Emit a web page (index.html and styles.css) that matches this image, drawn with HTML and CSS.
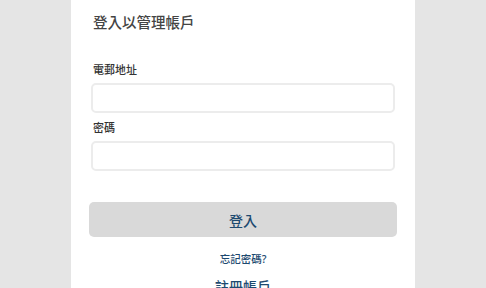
FILE: index.html
```html
<!DOCTYPE html>
<html lang="zh-Hant">
<head>
  <meta charset="UTF-8" />
  <title>登入</title>
  <link rel="stylesheet" href="styles.css">
</head>
<body>

<div class="card">
  <h1>登入以管理帳戶</h1>

  <form class="login-form" onsubmit="return false">
    <label for="email">電郵地址</label>
    <input type="email" id="email">
    <label for="password" class="second">密碼</label>
    <input type="password" id="password">
    <button type="submit">登入</button>
  </form>

  <a href="#" class="forgot">忘記密碼?</a>
  <a href="#" class="register">註冊帳戶</a>
</div>

</body>
</html>
```

FILE: styles.css
```css
html, body {
  margin: 0;
  height: 100%;
}
body {
  font-family: "Noto Sans", "Noto Sans CJK TC", sans-serif;
  background: #e5e5e5;
  color: #333;
}
.card {
  width: 344px;
  margin: 0 auto;
  min-height: 100%;
  box-sizing: border-box;
  background: white;
  padding: 12px 20px 20px;
}
h1 {
  margin: 0 0 30px 2px;
  font-size: 14.5px;
  line-height: 20px;
  font-weight: 500;
  color: #444;
}
.login-form {
  display: flex;
  flex-direction: column;
}
label {
  font-size: 11px;
  line-height: 16px;
  font-weight: 500;
  margin: 0 0 5px 2px;
  color: #333;
}
label.second {
  margin-top: 7px;
}
input {
  height: 30px;
  box-sizing: border-box;
  border: 2px solid #ececec;
  border-radius: 5px;
  padding: 4px 8px;
  font-size: 13px;
  outline: none;
}
button {
  margin: 31px -2px 0;
  height: 35px;
  border: none;
  border-radius: 5px;
  background: #d9d9d9;
  color: #1d4a70;
  font-family: inherit;
  font-size: 14px;
  font-weight: 500;
  cursor: pointer;
}
.forgot, .register {
  display: block;
  text-align: center;
  text-decoration: none;
  font-weight: 500;
  color: #1d4a70;
}
.forgot {
  margin-top: 14px;
  font-size: 10.5px;
  line-height: 16px;
}
.register {
  margin-top: 10px;
  font-size: 14px;
  line-height: 20px;
}
```
